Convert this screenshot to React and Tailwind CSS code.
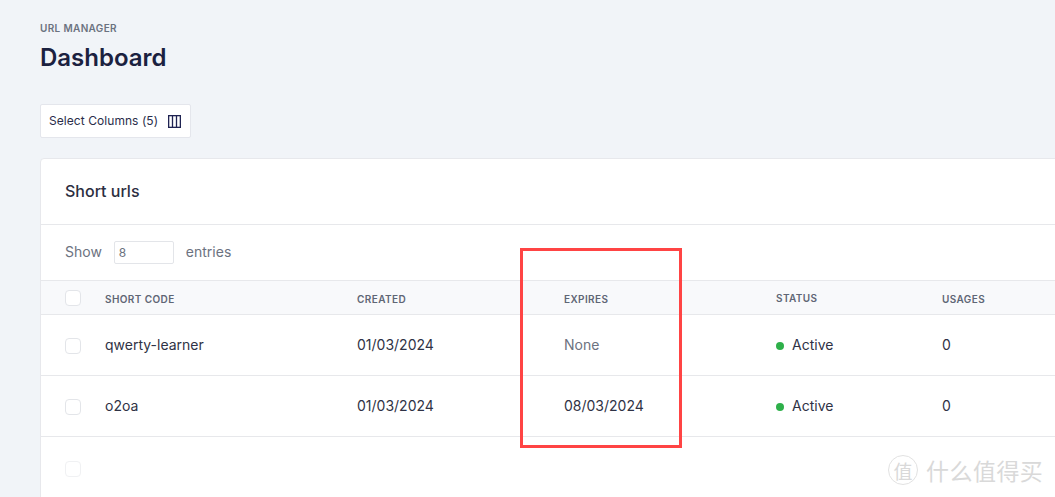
const inter = "font-['Inter','Noto_Sans_CJK_SC',sans-serif]";

function Check({ faint }) {
  return (
    <span className={`block w-4 h-4 rounded-[4px] border bg-white ${faint ? "border-[#f0f1f3]" : "border-[#e3e5e9]"}`} />
  );
}

function Head({ w, className = "", children }) {
  return (
    <div className={`${w} text-[10px] leading-4 font-semibold tracking-[0.04em] text-[#5f6675] ${className}`}>{children}</div>
  );
}

function Status() {
  return (
    <div className="w-[166px] flex items-center gap-2 text-[#2f3245]">
      <span className="w-2 h-2 mt-[1px] rounded-full bg-[#2eb04a]" />
      Active
    </div>
  );
}

function Row({ code, expires, muted }) {
  return (
    <div className="h-[61px] border-b border-[#e7e8eb] flex items-center text-[14px] leading-5 text-[#2f3245]">
      <div className="w-[64px] pl-6 mt-[2px]"><Check /></div>
      <div className="w-[252px]">{code}</div>
      <div className="w-[207px]">01/03/2024</div>
      <div className={`w-[212px] ${muted ? "text-[#6c7280]" : ""}`}>{expires}</div>
      <Status />
      <div>0</div>
    </div>
  );
}

export default function App() {
  return (
    <div className={`relative w-[1055px] h-[497px] overflow-hidden bg-[#f1f4f8] pl-10 pt-[21px] ${inter}`}>
      <div className="text-[10px] leading-[14px] font-semibold tracking-[0.035em] text-[#6b7280]">URL MANAGER</div>
      <h1 className="mt-[7px] text-[24px] leading-8 font-semibold text-[#1b2140]">Dashboard</h1>
      <button className="mt-[30px] h-[34px] w-[151px] flex items-center justify-between pl-2 pr-[9px] bg-white border border-[#e4e6ec] rounded-[2px] text-[12px] tracking-[0.005em] text-[#2a2d4a]">
        <span>Select Columns (5)</span>
        <svg width="13" height="13" viewBox="0 0 13 13" fill="none" stroke="#1f2352" strokeWidth="1.3">
          <rect x="0.65" y="0.65" width="11.7" height="11.7" />
          <path d="M4.5 1v11M8.5 1v11" />
        </svg>
      </button>
      <div className="mt-5 w-[1040px] h-[400px] bg-white border border-[#e7e8ec] rounded-t-[4px]">
        <div className="h-[66px] border-b border-[#e7e8eb] pl-6 pb-[1px] flex items-center text-[16px] font-medium text-[#2b2e3f]">Short urls</div>
        <div className="h-[56px] border-b border-[#e7e8eb] pl-6 flex items-center text-[14px] text-[#6c7280]">
          <span className="-mt-[2px]">Show</span>
          <span className="ml-3 w-[60px] h-[23px] border border-[#e3e5e9] rounded-[2px] pl-1 text-[12px] leading-[21px] text-[#6c7280]">8</span>
          <span className="ml-3 -mt-[2px]">entries</span>
        </div>
        <div className="h-[34px] pt-[2px] bg-[#f8f9fb] border-b border-[#e7e8eb] flex items-center">
          <div className="w-[64px] pl-6 -mt-[2px]"><Check /></div>
          <Head w="w-[252px]">SHORT CODE</Head>
          <Head w="w-[207px]">CREATED</Head>
          <Head w="w-[212px]">EXPIRES</Head>
          <Head w="w-[166px]" className="-mt-[2px]">STATUS</Head>
          <Head w="w-[60px]">USAGES</Head>
        </div>
        <Row code="qwerty-learner" expires="None" muted />
        <Row code="o2oa" expires="08/03/2024" />
        <div className="h-[61px] pt-[2px] flex items-center pl-6"><Check faint /></div>
      </div>

      <div className="absolute left-[520px] top-[248px] w-[162px] h-[200px] border-[3px] border-[#ff4444]" />

      <div className="absolute left-[888px] top-[455px] flex items-center gap-[8px] text-[#d9d9d9]">
        <span className="w-[30px] h-[30px] rounded-full border border-[#e2e2e2] flex items-center justify-center text-[19px] leading-none font-['Noto_Sans_CJK_SC',sans-serif]">值</span>
        <span className="text-[23px] leading-none tracking-[0.02em] font-['Noto_Sans_CJK_SC',sans-serif]">什么值得买</span>
      </div>
    </div>
  );
}
